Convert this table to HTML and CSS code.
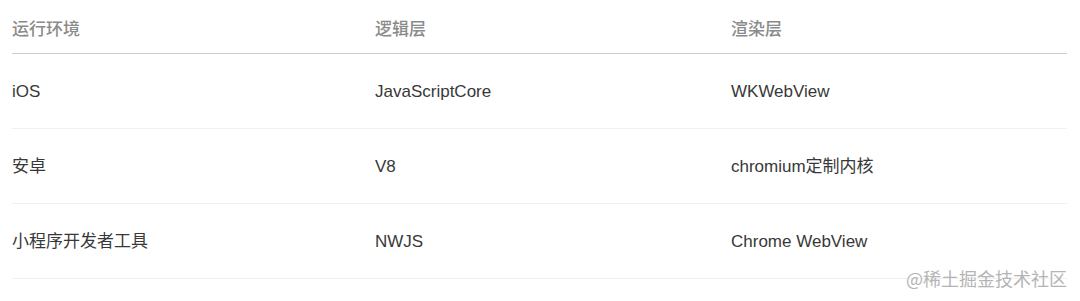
FILE: index.html
```html
<!DOCTYPE html>
<html lang="zh-CN">
<head>
<meta charset="utf-8">
<title>运行环境</title>
<link rel="stylesheet" href="styles.css">
</head>
<body>
<div class="page">
  <div class="table">
    <div class="row head">
      <div class="cell">运行环境</div>
      <div class="cell">逻辑层</div>
      <div class="cell">渲染层</div>
    </div>
    <div class="row">
      <div class="cell">iOS</div>
      <div class="cell">JavaScriptCore</div>
      <div class="cell">WKWebView</div>
    </div>
    <div class="row">
      <div class="cell">安卓</div>
      <div class="cell">V8</div>
      <div class="cell">chromium定制内核</div>
    </div>
    <div class="row">
      <div class="cell">小程序开发者工具</div>
      <div class="cell">NWJS</div>
      <div class="cell">Chrome WebView</div>
    </div>
  </div>
  <div class="watermark">@稀土掘金技术社区</div>
</div>
</body>
</html>
```

FILE: styles.css
```css
html, body {
  margin: 0;
  padding: 0;
  background: #ffffff;
}

body {
  font-family: "Liberation Sans", "Noto Sans CJK SC", sans-serif;
  font-size: 17px;
  color: #383838;
  overflow: hidden;
}

.page {
  position: relative;
  width: 1080px;
  height: 301px;
  padding: 0 13px 0 12px;
  box-sizing: border-box;
}

.table {
  display: flex;
  flex-direction: column;
  width: 1055px;
}

.row {
  display: grid;
  grid-template-columns: 363px 356px 336px;
  padding: 26px 0 24px;
  line-height: 24px;
  border-bottom: 1px solid #f0f0f0;
}

.row.head {
  padding: 18px 0 11px;
  color: #8a8a8a;
  font-weight: 500;
  border-bottom: 1px solid #cccccc;
}

.cell {
  white-space: nowrap;
}

.watermark {
  position: absolute;
  right: 13px;
  top: 266px;
  font-family: "Noto Sans CJK SC", "Liberation Sans", sans-serif;
  font-size: 18px;
  line-height: 24px;
  color: #b4b4b4;
  text-shadow: 0 0 1px #ffffff, 0 0 1px #ffffff;
}
```
